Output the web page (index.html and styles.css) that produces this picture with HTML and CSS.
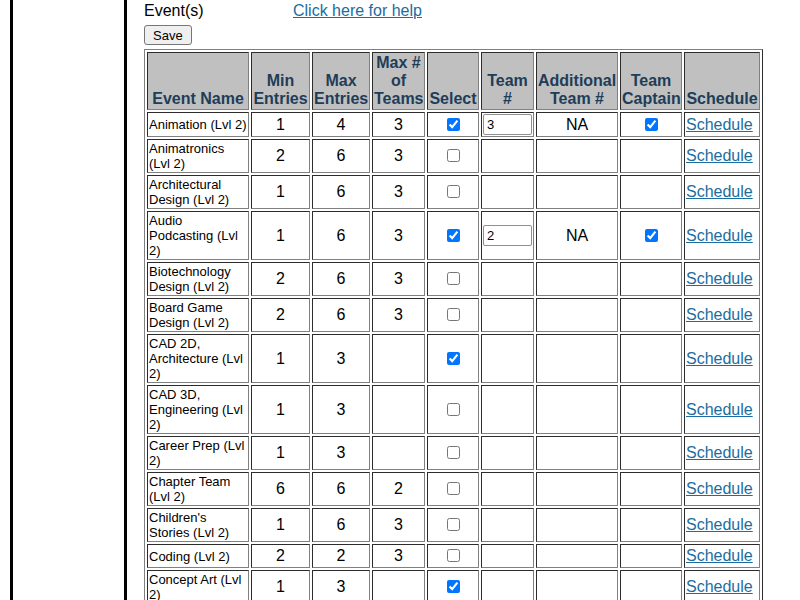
FILE: index.html
```html
<!DOCTYPE html>
<html>
<head>
<meta charset="utf-8">
<title>Events</title>
<link rel="stylesheet" href="styles.css">
</head>
<body>
<div class="shell">
  <aside class="sidebar"></aside>
  <main class="main">
    <div class="topline">
      <span class="label">Event(s)</span>
      <a class="help" href="#">Click here for help</a>
    </div>
    <button class="save" type="button">Save</button>
    <table class="grid">
      <thead>
        <tr>
          <th class="c1">Event Name</th>
          <th class="c2">Min Entries</th>
          <th class="c3">Max Entries</th>
          <th class="c4">Max # of Teams</th>
          <th class="c5">Select</th>
          <th class="c6">Team #</th>
          <th class="c7">Additional Team #</th>
          <th class="c8">Team Captain</th>
          <th class="c9">Schedule</th>
        </tr>
      </thead>
      <tbody>
        <tr>
          <td class="name">Animation (Lvl 2)</td><td>1</td><td>4</td><td>3</td>
          <td><input type="checkbox" checked></td>
          <td><input class="team" type="text" value="3"></td>
          <td>NA</td>
          <td><input type="checkbox" checked></td>
          <td class="sched"><a href="#">Schedule</a></td>
        </tr>
        <tr>
          <td class="name">Animatronics (Lvl 2)</td><td>2</td><td>6</td><td>3</td>
          <td><input type="checkbox"></td><td></td><td></td><td></td>
          <td class="sched"><a href="#">Schedule</a></td>
        </tr>
        <tr>
          <td class="name">Architectural Design (Lvl 2)</td><td>1</td><td>6</td><td>3</td>
          <td><input type="checkbox"></td><td></td><td></td><td></td>
          <td class="sched"><a href="#">Schedule</a></td>
        </tr>
        <tr>
          <td class="name">Audio Podcasting (Lvl 2)</td><td>1</td><td>6</td><td>3</td>
          <td><input type="checkbox" checked></td>
          <td><input class="team" type="text" value="2"></td>
          <td>NA</td>
          <td><input type="checkbox" checked></td>
          <td class="sched"><a href="#">Schedule</a></td>
        </tr>
        <tr>
          <td class="name">Biotechnology Design (Lvl 2)</td><td>2</td><td>6</td><td>3</td>
          <td><input type="checkbox"></td><td></td><td></td><td></td>
          <td class="sched"><a href="#">Schedule</a></td>
        </tr>
        <tr>
          <td class="name">Board Game Design (Lvl 2)</td><td>2</td><td>6</td><td>3</td>
          <td><input type="checkbox"></td><td></td><td></td><td></td>
          <td class="sched"><a href="#">Schedule</a></td>
        </tr>
        <tr>
          <td class="name">CAD 2D, Architecture (Lvl 2)</td><td>1</td><td>3</td><td></td>
          <td><input type="checkbox" checked></td><td></td><td></td><td></td>
          <td class="sched"><a href="#">Schedule</a></td>
        </tr>
        <tr>
          <td class="name">CAD 3D, Engineering (Lvl 2)</td><td>1</td><td>3</td><td></td>
          <td><input type="checkbox"></td><td></td><td></td><td></td>
          <td class="sched"><a href="#">Schedule</a></td>
        </tr>
        <tr>
          <td class="name">Career Prep (Lvl 2)</td><td>1</td><td>3</td><td></td>
          <td><input type="checkbox"></td><td></td><td></td><td></td>
          <td class="sched"><a href="#">Schedule</a></td>
        </tr>
        <tr>
          <td class="name">Chapter Team (Lvl 2)</td><td>6</td><td>6</td><td>2</td>
          <td><input type="checkbox"></td><td></td><td></td><td></td>
          <td class="sched"><a href="#">Schedule</a></td>
        </tr>
        <tr>
          <td class="name">Children's Stories (Lvl 2)</td><td>1</td><td>6</td><td>3</td>
          <td><input type="checkbox"></td><td></td><td></td><td></td>
          <td class="sched"><a href="#">Schedule</a></td>
        </tr>
        <tr>
          <td class="name">Coding (Lvl 2)</td><td>2</td><td>2</td><td>3</td>
          <td><input type="checkbox"></td><td></td><td></td><td></td>
          <td class="sched"><a href="#">Schedule</a></td>
        </tr>
        <tr>
          <td class="name">Concept Art (Lvl 2)</td><td>1</td><td>3</td><td></td>
          <td><input type="checkbox" checked></td><td></td><td></td><td></td>
          <td class="sched"><a href="#">Schedule</a></td>
        </tr>
        <tr>
          <td class="name">Cybersecurity (Lvl 2)</td><td>1</td><td>2</td><td>3</td>
          <td><input type="checkbox"></td><td></td><td></td><td></td>
          <td class="sched"><a href="#">Schedule</a></td>
        </tr>
        <tr>
          <td class="name">Digital Photography (Lvl 2)</td><td>1</td><td>1</td><td>3</td>
          <td><input type="checkbox"></td><td></td><td></td><td></td>
          <td class="sched"><a href="#">Schedule</a></td>
        </tr>
      </tbody>
    </table>
  </main>
</div>
</body>
</html>
```
FILE: styles.css
```css
html, body {
  margin: 0;
  padding: 0;
  background: #ffffff;
  font-family: "Liberation Sans", Arial, sans-serif;
  font-size: 16px;
  color: #000000;
}

.shell {
  display: flex;
  align-items: stretch;
  min-height: 100vh;
  padding-left: 10px;
}

.sidebar {
  flex: 0 0 auto;
  width: 111px;
  border-left: 3px solid #000000;
  border-right: 3px solid #000000;
}

.main {
  flex: 1 1 auto;
  padding: 2px 0 20px 17px;
}

.topline {
  display: flex;
  line-height: 18px;
}

.label {
  width: 149px;
}

.help {
  color: #1b6d9e;
  text-decoration: underline;
}

.save {
  display: block;
  margin: 5px 0 4px 0;
  height: 20px;
  padding: 0 8px;
  font-family: "Liberation Sans", Arial, sans-serif;
  font-size: 13px;
  color: #000000;
  background: #efefef;
  border: 1px solid #767676;
  border-radius: 3px;
}

.grid {
  table-layout: fixed;
  width: 619px;
  border: 1px outset #808080;
  border-spacing: 2px;
  border-collapse: separate;
}

.grid th,
.grid td {
  border: 1px inset #808080;
  padding: 1px;
}

.grid th {
  background: #c0c0c0;
  color: #1e3d58;
  font-weight: bold;
  font-size: 16px;
  text-align: center;
  vertical-align: bottom;
}

.grid td {
  text-align: center;
  vertical-align: middle;
  font-size: 16px;
}

.grid td.name {
  text-align: left;
  font-size: 13px;
}

.grid td.sched {
  text-align: left;
}

.c1 { width: 98px; }
.c2 { width: 55px; }
.c3 { width: 54px; }
.c4 { width: 49px; }
.c5 { width: 48px; }
.c6 { width: 49px; }
.c7 { width: 78px; }
.c8 { width: 58px; }
.c9 { width: 72px; }

.grid a {
  color: #1b6d9e;
  text-decoration: underline;
}

.team {
  display: block;
  box-sizing: border-box;
  width: 100%;
  height: 21px;
  margin: 0;
  padding: 1px 3px;
  font-family: "Liberation Sans", Arial, sans-serif;
  font-size: 13px;
  border: 1px solid #8f8f8f;
  border-radius: 2px;
}
```
